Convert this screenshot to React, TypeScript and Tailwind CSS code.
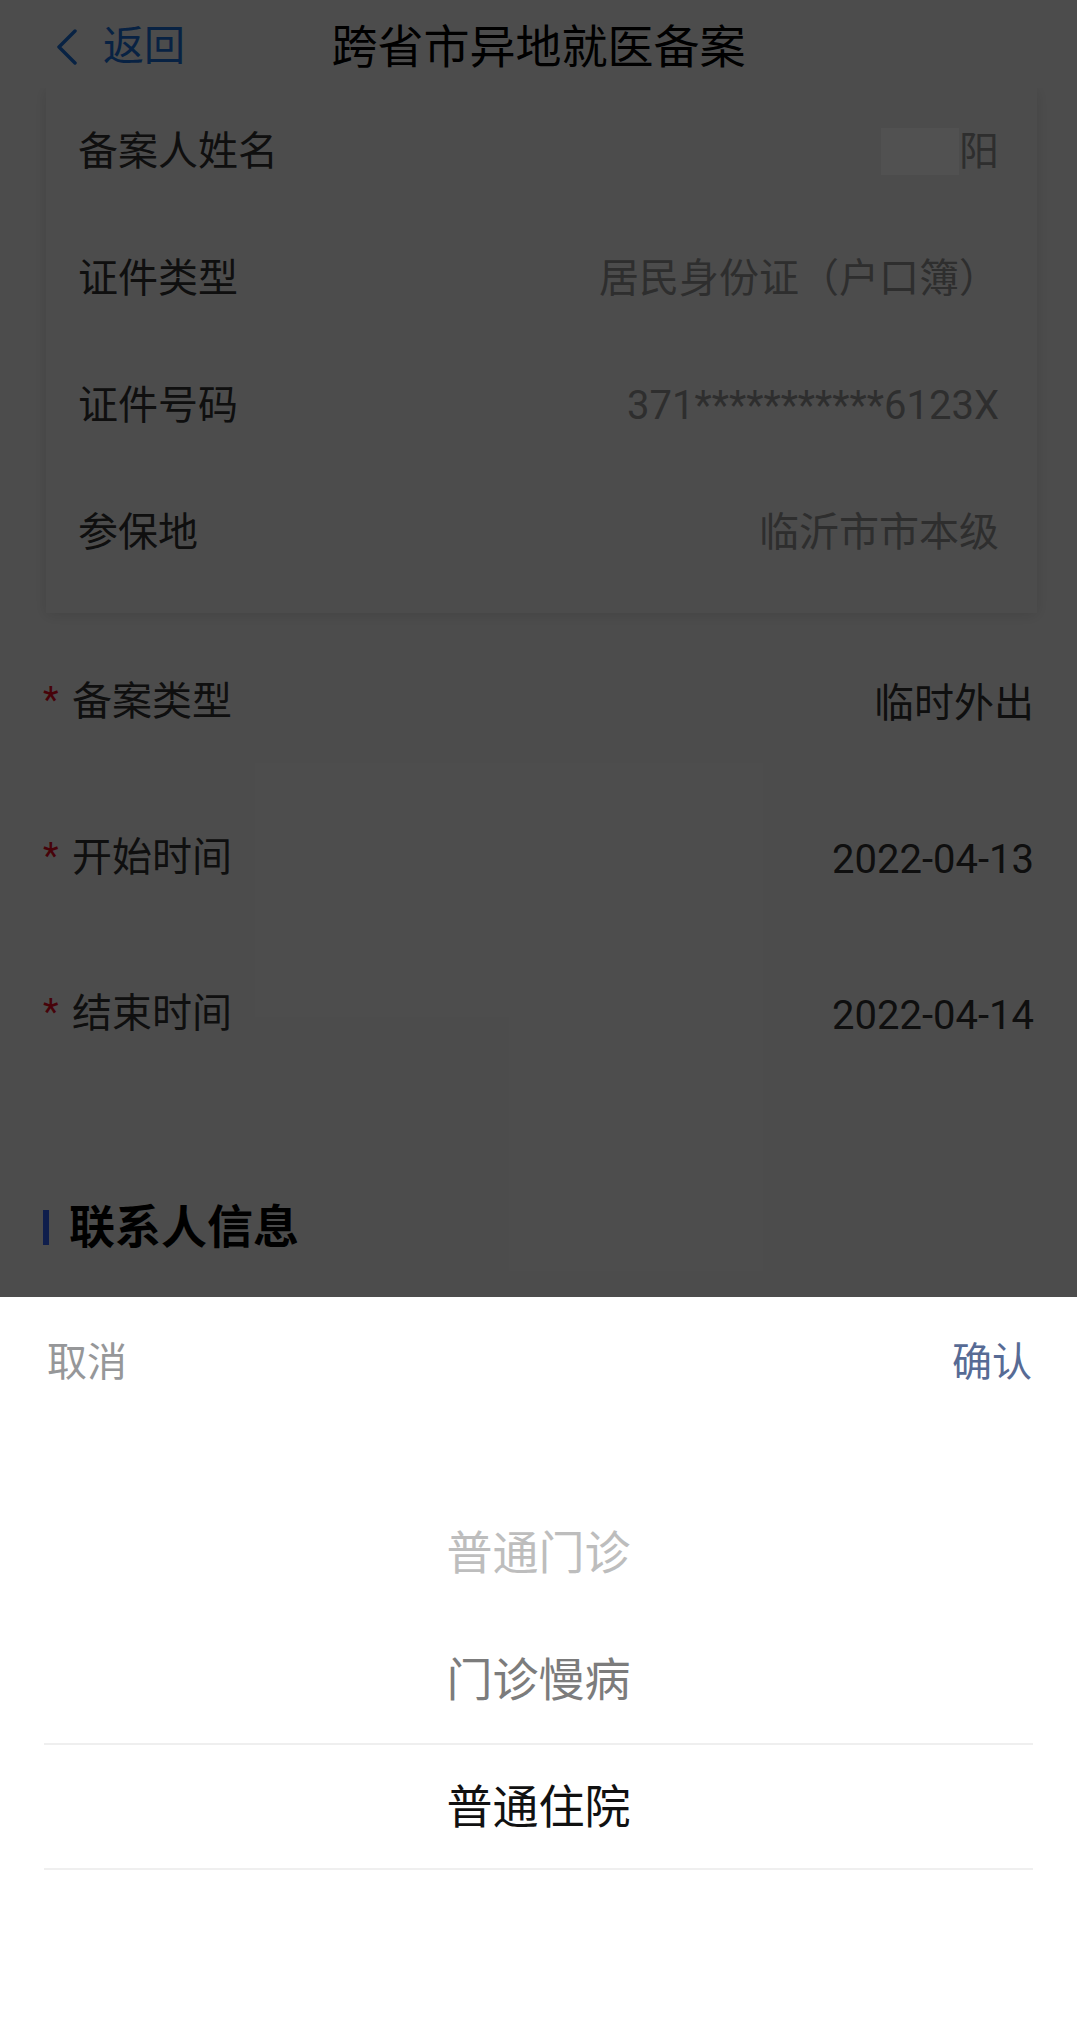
import { useState } from "react";

const cardRows = [
  { label: "备案人姓名", value: "阳", masked: true },
  { label: "证件类型", value: "居民身份证（户口簿）" },
  { label: "证件号码", value: "371***********6123X" },
  { label: "参保地", value: "临沂市市本级" },
];

const formRows = [
  { label: "备案类型", value: "临时外出" },
  { label: "开始时间", value: "2022-04-13" },
  { label: "结束时间", value: "2022-04-14" },
];

const options = ["普通门诊", "门诊慢病", "普通住院"];

function BackIcon() {
  return (
    <svg width="24" height="36" viewBox="0 0 24 36" fill="none">
      <polyline
        points="20,2 4,18 20,34"
        stroke="#1c74e0"
        strokeWidth="3.5"
        strokeLinecap="round"
        strokeLinejoin="round"
      />
    </svg>
  );
}

function App() {
  const [selected] = useState(2);

  return (
    <div className="relative w-full h-[2029px] overflow-hidden bg-white font-[Roboto,'Noto_Sans_CJK_SC',sans-serif]">
      {/* header */}
      <div className="relative z-10 grid grid-cols-[1fr_auto_1fr] items-center h-[88px] pt-[5px] bg-white">
        <div className="flex items-center pl-[55px] gap-[24px] text-[#1c74e0] text-[41px] leading-none">
          <BackIcon />
          <span>返回</span>
        </div>
        <h1 className="text-[46px] leading-none text-black font-normal">跨省市异地就医备案</h1>
        <div />
      </div>

      {/* info card */}
      <div className="ml-[46px] mr-[40px] bg-white shadow-[0_2px_14px_rgba(0,0,0,0.12)] pl-[32px] pr-[38px] pb-[17px]">
        {cardRows.map((row, i) => (
          <div key={i} className="flex items-center justify-between h-[127px] text-[40px] leading-none">
            <span className="text-[#333]">{row.label}</span>
            <span className="flex items-center text-[#9a9a9a]">
              {row.masked && (
                <span className="relative z-30 inline-block w-[78px] h-[47px] bg-[#515151]" />
              )}
              {row.value}
            </span>
          </div>
        ))}
      </div>

      {/* form rows */}
      <div className="mt-[13px] pl-[43px] pr-[43px]">
        {formRows.map((row, i) => (
          <div key={i} className="flex items-center justify-between h-[156px] text-[40px] leading-none">
            <span className="flex items-center -mt-[5px]">
              <span className="text-[#ee0a24] text-[36px] w-[29px] -mt-[4px]">*</span>
              <span className="text-[#333]">{row.label}</span>
            </span>
            <span className="text-[#333]">{row.value}</span>
          </div>
        ))}
      </div>

      <div className="mt-[83px] h-[100px] flex items-center pl-[43px]">
        <span className="w-[6px] h-[35px] bg-[#3366ff]" />
        <span className="ml-[20px] text-[46px] font-bold leading-none text-black">联系人信息</span>
      </div>

      {/* mask */}
      <div className="absolute inset-0 z-20 bg-black/70" />

      {/* picker sheet */}
      <div className="absolute left-0 right-0 bottom-0 z-40 h-[732px] bg-white">
        <div className="flex items-center justify-between h-[132px] pl-[47px] pr-[45px] text-[40px] leading-none">
          <span className="text-[#969799]">取消</span>
          <span className="text-[#576b95]">确认</span>
        </div>
        <div className="mt-[60px] mx-[44px]">
          {options.map((opt, i) => (
            <div
              key={opt}
              className={
                i === selected
                  ? "flex items-center justify-center h-[127px] text-[46px] leading-none text-[#111] border-y-2 border-[#efefef]"
                  : i === selected - 1
                  ? "flex items-center justify-center h-[127px] text-[46px] leading-none text-[#7c7c7c]"
                  : "flex items-center justify-center h-[127px] text-[46px] leading-none text-[#bdbdbd]"
              }
            >
              {opt}
            </div>
          ))}
        </div>
      </div>
    </div>
  );
}

export default App;
